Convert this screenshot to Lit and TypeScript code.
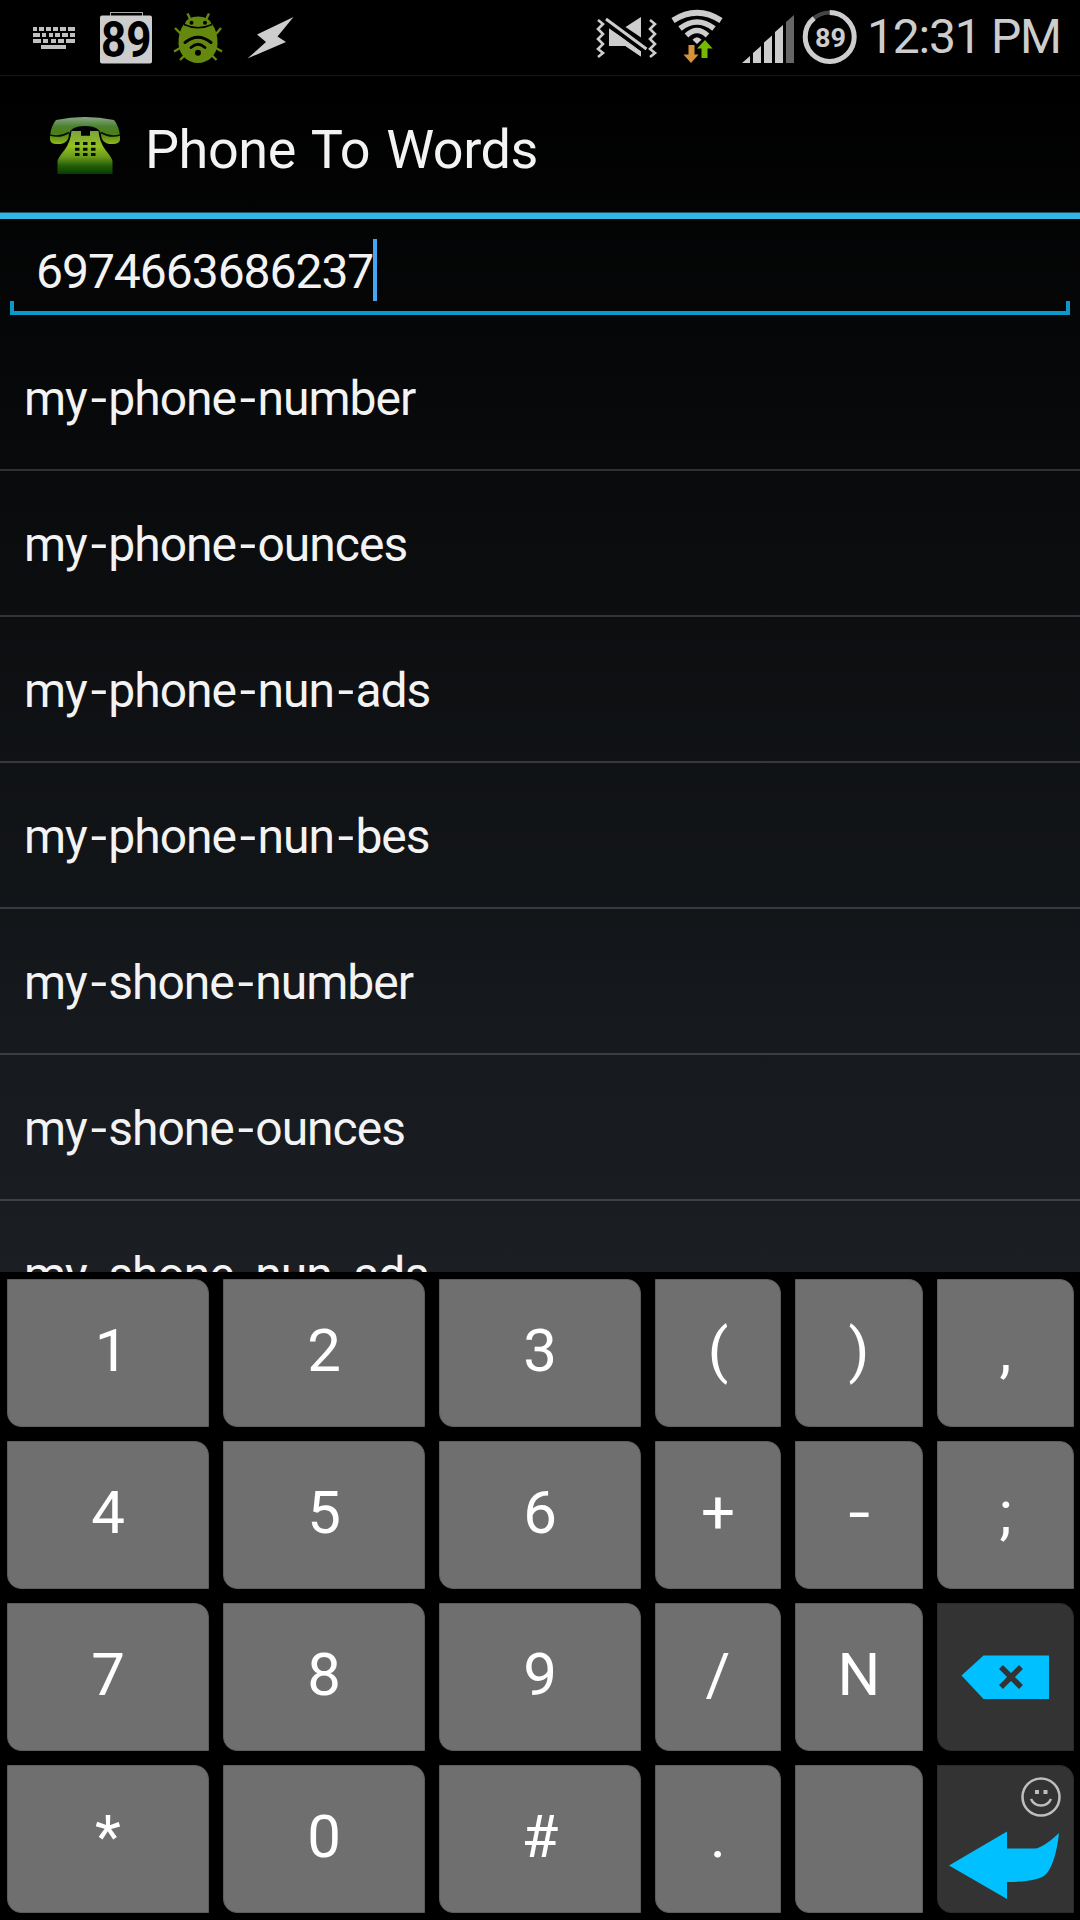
import { LitElement, html, svg, css } from "lit";
import { customElement } from "lit/decorators.js";

const WORDS = [
  "my-phone-number",
  "my-phone-ounces",
  "my-phone-nun-ads",
  "my-phone-nun-bes",
  "my-shone-number",
  "my-shone-ounces",
  "my-shone-nun-ads",
];

const KEYS = [
  ["1", "2", "3", "(", ")", ","],
  ["4", "5", "6", "+", "-", ";"],
  ["7", "8", "9", "/", "N", "del"],
  ["*", "0", "#", ".", "", "enter"],
];

@customElement("status-bar")
class StatusBar extends LitElement {
  static styles = css`
    :host { display: block; flex: none; height: 76px; background: #000; }
    svg { display: block; }
    .clock { font: 48px Roboto, sans-serif; fill: #cdcdcd; }
    .badge { font: bold 50px Roboto, sans-serif; fill: #000; }
    .level { font: bold 26px Roboto, sans-serif; fill: #cdcdcd; }
  `;

  private keyRow(y: number, xs: number[][]) {
    return xs.map(([x, w]) => svg`<rect x=${x} y=${y} width=${w} height="4"/>`);
  }

  render() {
    return html`
      <svg width="1080" height="76" viewBox="0 0 1080 76">
        <rect y="75" width="1080" height="1" fill="#151515" />
        <g fill="#c0c0c0">
          ${this.keyRow(27, [[33, 4], [39, 5], [46, 5], [53, 5], [60, 6], [68, 7]])}
          ${this.keyRow(33, [[33, 7], [42, 4], [49, 4], [55, 5], [62, 6], [70, 5]])}
          ${this.keyRow(39, [[33, 8], [43, 5], [51, 5], [58, 6], [66, 9]])}
          ${this.keyRow(45, [[41, 25]])}
        </g>

        <rect x="110.5" y="12.5" width="32" height="6" fill="none" stroke="#a8a8a8" />
        <rect x="100" y="15.500" width="52" height="48" rx="2" fill="#cdcdcd" />
        <text class="badge" x="101" y="57" textLength="50.500" lengthAdjust="spacingAndGlyphs">89</text>

        <g fill="#64890e" stroke="#64890e">
          <path d="M184 24Q198 31 212 24Q218 32 217.500 44C217 55 208 63 198 63S179 55 178.500 44Q178 32 184 24Z" stroke="none" />
          <path d="M184.800 24Q187 16.500 198 16.500T211.500 24Q206 28 198 28T184.800 24Z" stroke="none" />
          <path d="M187.500 13.500l3 6M209 13.500l-3 6M175 28l6 6M221 28l-5 6M174 51.500l7-4M222 51.500l-7-4M180 60l5-5M216.500 60l-5-5" fill="none" stroke-width="2.400" />
        </g>
        <g fill="none" stroke="#000">
          <path d="M184 24.500Q198 31 212 24.500" stroke-width="1.500" />
          <path d="M185 42.500Q198 32 211 42.500" stroke-width="3" stroke-linecap="round" />
          <path d="M191 47.500Q198 41 205 47.500" stroke-width="2.800" stroke-linecap="round" />
        </g>
        <circle cx="198" cy="52.700" r="3" />
        <circle cx="191.500" cy="22.700" r="2" /><circle cx="205" cy="22.700" r="2" />

        <path d="M293.500 17L257 34.500L266 42L247.500 58.500L286 42L277.500 36.500Z" fill="#cdcdcd" />

        <g fill="#cdcdcd">
          <path d="M609 28.500v17.500h16.500L641 56.500v-5zM641 17v20.500L625.500 27z" />
          <path d="M606 19l40.500 30" fill="none" stroke="#000" stroke-width="8" />
          <path d="M609 28.500v17.500h16.500L641 56.500v-5L620 36z" />
          <path d="M606 19l40.500 30" fill="none" stroke="#cdcdcd" stroke-width="3" />
          <path d="M598 20l5 4-5 5 5 5-5 5 5 5-5 5 5 4-5 4M650 20l5 4-5 5 5 5-5 5 5 5-5 5 5 4-5 4" fill="none" stroke="#cdcdcd" stroke-width="2.600" />
        </g>

        <g fill="none" stroke="#cdcdcd">
          <path d="M673 20.500Q697 5 721 20.500" stroke-width="5.800" />
          <path d="M680 28.500Q697 15.500 714 28.500" stroke-width="5.500" />
          <path d="M686.500 35.500Q697 25.500 707.500 35.500" stroke-width="5.300" />
        </g>
        <path d="M692.500 39.700q4.500-5 9 0L697 44z" fill="#cdcdcd" />
        <path d="M688.500 45h6v9.500h4L691 63l-7.500-8.500h5z" fill="#d6923a" />
        <path d="M705 40l7.500 8.500h-5V58h-6v-9.500h-4.500z" fill="#76b900" />

        <g fill="#cdcdcd">
          <path d="M742 63l8-7v7zM753 53l8-7v17h-8zM764 42.500l8-7V63h-8zM775 32l8-7v38h-8z" />
          <path d="M786 22l8-7v48h-8z" fill="#666" />
        </g>

        <circle cx="829.700" cy="37" r="24.500" fill="none" stroke="#444" stroke-width="4" />
        <circle cx="829.700" cy="37" r="24.500" fill="none" stroke="#cdcdcd" stroke-width="5" pathLength="100" stroke-dasharray="89 11" transform="rotate(-90 829.700 37)" />
        <text class="level" x="815" y="46.500" textLength="31" lengthAdjust="spacingAndGlyphs">89</text>
        <text class="clock" x="867" y="53" textLength="195">12:31 PM</text>
      </svg>
    `;
  }
}

@customElement("title-bar")
class TitleBar extends LitElement {
  static styles = css`
    :host { display: flex; flex: none; box-sizing: border-box; height: 143px; padding: 0 0 0 50px; border-bottom: 6px solid #33b5e5; box-shadow: inset 0 -1px #18566d; }
    .phone { flex: none; display: block; width: 70px; height: 57px; margin-top: 41px; }
    .title { margin: 0 0 0 25px; font: 54px/147px Roboto, sans-serif; letter-spacing: -0.45px; word-spacing: 3px; color: #f3f3f3; white-space: nowrap; }
  `;

  render() {
    return html`
      <svg class="phone" viewBox="0 0 70 57">
        <defs>
          <linearGradient id="receiver" x2="0" y2="1">
            <stop offset="0" stop-color="#8aa886" /><stop offset=".35" stop-color="#4b8130" />
            <stop offset=".6" stop-color="#4b7e15" /><stop offset="1" stop-color="#8fb91a" />
          </linearGradient>
          <linearGradient id="body" x2="0" y2="1">
            <stop offset="0" stop-color="#7ba33e" /><stop offset=".35" stop-color="#93c01f" />
            <stop offset=".6" stop-color="#6b9a1c" /><stop offset=".8" stop-color="#265f08" /><stop offset="1" stop-color="#063c02" />
          </linearGradient>
        </defs>
        <path d="M6 3Q35-3 64 3Q69 9 70 19V23Q69 27 63 27H59Q51 25 51 17Q49 9 35 9Q21 9 19 17Q19 25 11 27H6Q1 27 0 23V19Q1 9 6 3Z" fill="url(#receiver)" />
        <path d="M0 18Q10 21 19 15.500M51 15.500Q60 21 70 18" fill="none" stroke="#071004" stroke-width="1.500" />
        <path d="M21.500 14H31v4.700h9V14h8.500q1 11 7 19Q62 41 62.500 44v13H7.500V44Q8 41 14.500 33Q20.500 25 21.500 14Z" fill="url(#body)" />
        <path d="M25 25h4.500v3H25zM33 25h4.500v3H33zM41 25h4.500v3H41zM25 30.700h4.500v3H25zM33 30.700h4.500v3H33zM41 30.700h4.500v3H41zM25 36h4.500v3H25zM33 36h4.500v3H33zM41 36h4.500v3H41z" fill="#061002" />
      </svg>
      <h1 class="title">Phone To Words</h1>
    `;
  }
}

@customElement("key-pad")
class KeyPad extends LitElement {
  static styles = css`
    :host { display: block; flex: none; box-sizing: border-box; height: 648px; padding: 7px 6px 7px 7px; background: #000; }
    .grid { display: grid; grid-template-columns: 202px 202px 202px 126px 128px 137px; grid-auto-rows: 148px; gap: 14px; }
    .key { display: flex; justify-content: center; box-sizing: border-box; border: 1px solid #5c5c5c; border-radius: 0 14px 0 14px; background: #6f6f6f; color: #fff; font: 60px/142px Roboto, sans-serif; }
    .one { padding-left: 7px; }
    .wide { transform: scaleX(1.3); }
    .dark { border-color: #2b2b2b; background: #333; }
    .icon { display: block; width: 135px; height: 146px; }
  `;

  private face(key: string) {
    if (key === "del") {
      return html`<svg class="icon" viewBox="0 0 135 146">
        <path d="M23.500 71.500L45.500 51.500H111v43.500H45.500z" fill="#00c0ff" />
        <path d="M63 63l20 20M83 63l-20 20" stroke="#333" stroke-width="5.500" />
      </svg>`;
    }
    if (key === "enter") {
      return html`<svg class="icon" viewBox="0 0 135 146">
        <g fill="none" stroke="#bebebe" stroke-width="2.500">
          <circle cx="103" cy="31" r="18.500" />
          <path d="M93 33q3 6.500 10 6.500t10-6.500" />
        </g>
        <path d="M97 24h4v4h-4zM105.500 24h4v4h-4z" fill="#bebebe" />
        <path d="M11 99.500L69 65.500v17h28Q105 82 121 67Q118 95 109 107Q103 116 69 116v17z" fill="#00c0ff" />
      </svg>`;
    }
    return key === "-" ? html`<span class="wide">-</span>` : key;
  }

  render() {
    return html`<div class="grid">
      ${KEYS.flat().map((k) => html`<div class=${k.length > 1 ? "key dark" : k === "1" ? "key one" : "key"}>${this.face(k)}</div>`)}
    </div>`;
  }
}

@customElement("app-root")
class AppRoot extends LitElement {
  static styles = css`
    :host { display: flex; flex-direction: column; width: 1080px; height: 1920px; overflow: hidden; background: linear-gradient(#000 76px, #1b1f24 1272px); }
    .entry { flex: none; display: flex; align-items: flex-start; box-sizing: border-box; height: 82px; padding: 20px 0 0 36px; }
    .number { font: 48px/66px Roboto, sans-serif; letter-spacing: -1.03px; color: #f3f3f3; }
    .caret { width: 4px; height: 62px; background: #45a5f5; }
    .underline { flex: none; box-sizing: border-box; height: 14px; margin: 0 10px; border: solid #0a98cd; border-width: 0 4px 4px; }
    .list { flex: 1; min-height: 0; overflow: hidden; padding-top: 10px; }
    .word { box-sizing: border-box; height: 146px; padding-left: 24px; border-bottom: 2px solid rgba(255, 255, 255, 0.16); font: 48px/147px Roboto, sans-serif; letter-spacing: -1px; color: #f3f3f3; white-space: nowrap; }
    .dash { display: inline-block; margin: 0 4.200px 0 5px; transform: scaleX(1.22); }
  `;

  private word(text: string) {
    return text.split("-").map((part, i) => (i ? html`<span class="dash">-</span>${part}` : part));
  }

  render() {
    return html`
      <status-bar></status-bar>
      <title-bar></title-bar>
      <div class="entry"><span class="number">6974663686237</span><span class="caret"></span></div>
      <div class="underline"></div>
      <div class="list">${WORDS.map((w) => html`<div class="word">${this.word(w)}</div>`)}</div>
      <key-pad></key-pad>
    `;
  }
}
